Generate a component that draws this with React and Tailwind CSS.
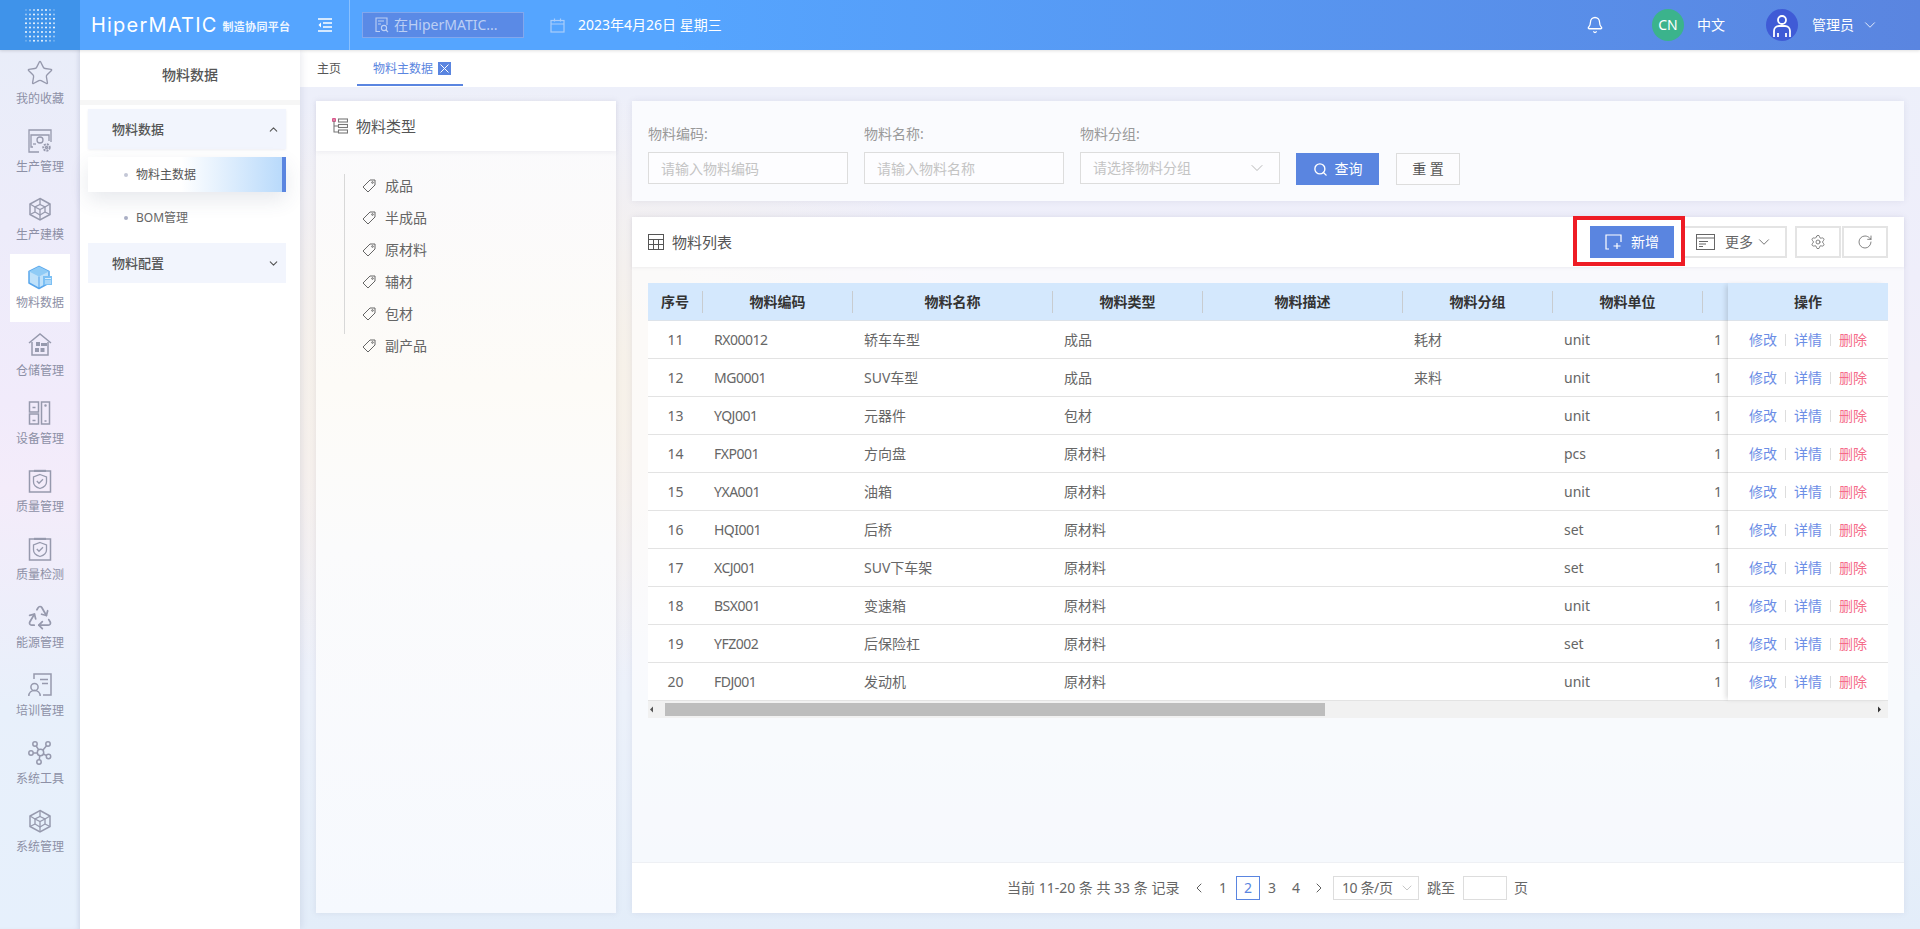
import { Bell, ChevronDown, ChevronLeft, ChevronRight, ChevronUp, Recycle, RotateCw, Search, Settings, Star } from 'lucide-react'

const RAIL = [
  { label: '我的收藏', icon: 'star' },
  { label: '生产管理', icon: 'prod' },
  { label: '生产建模', icon: 'hex' },
  { label: '物料数据', icon: 'cube', active: true },
  { label: '仓储管理', icon: 'house' },
  { label: '设备管理', icon: 'device' },
  { label: '质量管理', icon: 'shield' },
  { label: '质量检测', icon: 'shield' },
  { label: '能源管理', icon: 'recycle' },
  { label: '培训管理', icon: 'train' },
  { label: '系统工具', icon: 'hub' },
  { label: '系统管理', icon: 'hex' },
]

const TYPES = ['成品', '半成品', '原材料', '辅材', '包材']

const COLS = [
  { title: '物料编码', w: 'w-[150px]', key: 'code', latin: true },
  { title: '物料名称', w: 'w-[200px]', key: 'name' },
  { title: '物料类型', w: 'w-[150px]', key: 'type' },
  { title: '物料描述', w: 'w-[200px]', key: 'desc' },
  { title: '物料分组', w: 'w-[150px]', key: 'group' },
  { title: '物料单位', w: 'w-[150px]', key: 'unit' },
  { title: '', w: 'w-[150px]', key: 'qty' },
]

const ROWS = [
  { no: 11, code: 'RX00012', name: '轿车车型', type: '成品', desc: '', group: '耗材', unit: 'unit', qty: 1 },
  { no: 12, code: 'MG0001', name: 'SUV车型', type: '成品', desc: '', group: '来料', unit: 'unit', qty: 1 },
  { no: 13, code: 'YQJ001', name: '元器件', type: '包材', desc: '', group: '', unit: 'unit', qty: 1 },
  { no: 14, code: 'FXP001', name: '方向盘', type: '原材料', desc: '', group: '', unit: 'pcs', qty: 1 },
  { no: 15, code: 'YXA001', name: '油箱', type: '原材料', desc: '', group: '', unit: 'unit', qty: 1 },
  { no: 16, code: 'HQI001', name: '后桥', type: '原材料', desc: '', group: '', unit: 'set', qty: 1 },
  { no: 17, code: 'XCJ001', name: 'SUV下车架', type: '原材料', desc: '', group: '', unit: 'set', qty: 1 },
  { no: 18, code: 'BSX001', name: '变速箱', type: '原材料', desc: '', group: '', unit: 'unit', qty: 1 },
  { no: 19, code: 'YFZ002', name: '后保险杠', type: '原材料', desc: '', group: '', unit: 'set', qty: 1 },
  { no: 20, code: 'FDJ001', name: '发动机', type: '原材料', desc: '', group: '', unit: 'unit', qty: 1 },
]

export default function App() {
  return (
    <div className="h-screen w-full flex flex-col overflow-hidden font-['Noto_Sans','Noto_Sans_CJK_SC',sans-serif] bg-[linear-gradient(180deg,#ecf0fa_0%,#efeefa_30%,#f3eef8_50%,#ecf1fa_75%,#e3edf9_100%)]">
      <Header />
      <div className="flex-1 flex min-h-0">
        <Rail />
        <SubMenu />
        <div className="flex-1 flex flex-col min-w-0 bg-[radial-gradient(ellipse_520px_300px_at_12%_38%,#f8f2e4_0%,transparent_100%)]">
          <Tabs />
          <div className="flex-1 flex gap-4 pt-[14px] px-4 pb-4 min-h-0">
            <TypeCard />
            <div className="flex-1 flex flex-col gap-4 min-w-0">
              <SearchCard />
              <ListCard />
            </div>
          </div>
        </div>
      </div>
    </div>
  )
}

function Header() {
  return (
    <div className="relative z-20 h-[50px] flex items-center shrink-0 text-white bg-[linear-gradient(90deg,#55a5ff_0%,#55a5ff_35%,#5a85e0_100%)] shadow-[0_1px_3px_rgba(0,0,0,0.12)]">
      <div className="w-20 h-full flex items-center justify-center bg-[#3f93ea]">
        <DotLogo />
      </div>
      <div className="w-[220px] h-full flex items-center pl-[11px]">
        <span className="font-['Inter',sans-serif] font-normal text-[20px] leading-none tracking-[1.2px] whitespace-nowrap">HiperMATIC</span>
        <span className="ml-[5px] mt-[3px] text-[11px] leading-none font-bold tracking-[0.3px] whitespace-nowrap opacity-90">制造协同平台</span>
      </div>
      <div className="w-[50px] h-full flex items-center justify-center border-r border-white/30">
        <svg width="16" height="14" viewBox="0 0 16 14" fill="none" stroke="#fff" strokeWidth="1.4">
          <path d="M1 1h14M6 5h9M6 9h9M1 13h14" />
          <path d="M4 4.5 1.5 7 4 9.5" fill="#fff" stroke="none" />
        </svg>
      </div>
      <div className="ml-[12px] w-[162px] h-[26px] flex items-center gap-[5px] pl-[12px] border border-white/25 bg-[#5a8ae6] text-sm text-white/60">
        <svg width="14" height="16" viewBox="0 0 14 16" fill="none" stroke="currentColor" strokeWidth="1.1" className="shrink-0">
          <path d="M5 14.5H1V1h11v7M3 4h6M3 7h3" />
          <circle cx="9" cy="11" r="2.6" />
          <path d="m11 13 2 2" />
        </svg>
        <span className="whitespace-nowrap">在HiperMATIC...</span>
      </div>
      <svg width="15" height="15" viewBox="0 0 15 15" fill="none" stroke="#a9cdfb" strokeWidth="1.2" className="ml-[26px]">
        <rect x="1" y="2.5" width="13" height="11.5" />
        <path d="M1 6h13M4.5 0.5v3M10.5 0.5v3" />
      </svg>
      <span className="ml-[13px] text-sm whitespace-nowrap">2023年4月26日 星期三</span>
      <div className="ml-auto flex items-center">
        <Bell size={18} strokeWidth={1.7} className="mr-[48px]" />
        <div className="w-8 h-8 rounded-full bg-[#3bb38c] flex items-center justify-center text-sm">CN</div>
        <span className="ml-[13px] text-sm">中文</span>
        <div className="ml-[41px] w-8 h-8 rounded-full bg-[#3f5bd6] flex items-center justify-center">
          <svg width="20" height="26" viewBox="0 0 20 26" fill="none" stroke="#fff" strokeWidth="1.8">
            <circle cx="10" cy="8" r="4" />
            <path d="M2 25v-6a5 5 0 0 1 5-5h6a5 5 0 0 1 5 5v6M6 25v-4M14 25v-4" />
          </svg>
        </div>
        <span className="ml-[14px] text-sm">管理员</span>
        <ChevronDown size={18} strokeWidth={1.1} className="ml-[7px] mr-[41px]" />
      </div>
    </div>
  )
}

function DotLogo() {
  const dots = []
  for (let y = 0; y < 8; y++) {
    for (let x = 0; x < 8; x++) {
      const edge = Math.min(x, 7 - x) + Math.min(y, 7 - y)
      const op = edge === 0 ? 0.25 : edge === 1 ? 0.5 : (x + y) % 2 ? 0.95 : 0.7
      dots.push(<circle key={x + '-' + y} cx={2 + x * 4} cy={2 + y * 4.4} r="1" fill="#fff" opacity={op} />)
    }
  }
  return (
    <svg width="32" height="34" viewBox="0 0 32 34">
      {dots}
    </svg>
  )
}

function Rail() {
  return (
    <div className="w-20 shrink-0 flex flex-col bg-[linear-gradient(180deg,#e9edf9_0%,#f1ebfb_40%,#f4ecfa_50%,#e8f0fb_75%,#e6f0fc_100%)] shadow-[inset_-4px_0_6px_-4px_rgba(80,90,130,0.18)]">
      {RAIL.map((item) => (
        <div key={item.label} className={`mx-[10px] h-[68px] pt-[11px] flex flex-col items-center ${item.active ? 'bg-white' : ''}`}>
          <div className="h-6 flex items-center justify-center">
            <RailIcon name={item.icon} />
          </div>
          <span className="mt-[6px] text-xs leading-4 text-[#8d90a6] whitespace-nowrap">{item.label}</span>
        </div>
      ))}
    </div>
  )
}

function RailIcon({ name }) {
  const c = '#9699ad'
  if (name === 'star') return <Star size={28} strokeWidth={1.15} color={c} />
  if (name === 'recycle') return <Recycle size={28} strokeWidth={1.5} color={c} />
  if (name === 'cube') {
    return (
      <svg width="26" height="25" viewBox="0 0 26 25">
        <path d="M12 1.500 22 6.500v11.500l-10 5.500L2 18V6.500z" fill="#bfe1fa" stroke="#58a6ec" strokeWidth="1.500" strokeLinejoin="round" />
        <path d="M2 6.500l10 5 10-5-10-5z" fill="#8fcbf6" />
        <path d="M12 11.500v12" stroke="#58a6ec" strokeWidth="1.100" />
        <rect x="16" y="11" width="9" height="9" fill="#7cc0f4" />
        <path d="M18 13.500h6M18 16h6M18 18h6" stroke="#e1f2fd" strokeWidth="0.900" />
      </svg>
    )
  }
  return (
    <svg width="24" height="24" viewBox="0 0 24 24" fill="none" stroke={c} strokeWidth="1.3">
      {name === 'prod' && (
        <>
          <path d="M11 23H1V1h22v12" />
          <path d="M5 18H3V6h18v6" />
          <circle cx="12" cy="11" r="3" />
          <path d="M5 15h3" />
          <circle cx="18.500" cy="18.500" r="3.200" strokeWidth="2" strokeDasharray="2 1" />
          <circle cx="18.500" cy="18.500" r="1" />
        </>
      )}
      {name === 'hex' && (
        <>
          <path d="M12 1.500 22 7v10.500L12 23 2 17.500V7z" strokeWidth="1.500" />
          <path d="M12 7.500 17 10v5l-5 3-5-3v-5z" />
          <path d="M12 1.500v6M22 7l-5 3M2 7l5 3M12 18v5M7 15l-5 2.500M17 15l5 2.500M7 10l5 2.500 5-2.500M12 12.500V18" />
        </>
      )}
      {name === 'house' && (
        <>
          <path d="M1 10 12 1l11 9" strokeWidth="1.500" />
          <path d="M4 9v13h16V9" strokeWidth="1.500" />
          <rect x="8" y="9" width="4" height="4" fill={c} stroke="none" />
          <rect x="13" y="10" width="6" height="3" fill={c} stroke="none" />
          <rect x="7" y="15" width="4" height="4" fill={c} stroke="none" />
          <rect x="12.500" y="15" width="4" height="4" fill={c} stroke="none" />
        </>
      )}
      {name === 'device' && (
        <>
          <rect x="1.500" y="1" width="9" height="10" strokeWidth="1.500" />
          <rect x="1.500" y="13" width="9" height="10" strokeWidth="1.500" />
          <rect x="13.500" y="1" width="8" height="22" strokeWidth="1.500" />
          <path d="M4.500 6.500h3M4.500 19.500h3M16.500 20h2" />
          <circle cx="17.500" cy="4.500" r="0.600" />
        </>
      )}
      {name === 'shield' && (
        <>
          <path d="M6 2H1.500v21h21V2H18" strokeWidth="1.500" />
          <rect x="6" y="0.800" width="12" height="2.200" fill={c} stroke="none" />
          <path d="M12 5.500 18.500 8v5c0 3.500-3 5.500-6.500 6.500C8.500 18.500 5.500 16.500 5.500 13V8z" />
          <path d="m8.800 12 2.200 2.300 4-4" />
        </>
      )}
      {name === 'train' && (
        <>
          <path d="M6 6V1h17v21h-8" strokeWidth="1.500" />
          <path d="M12 6.500h8M14 10.500h6" strokeWidth="1.500" />
          <circle cx="6.500" cy="14" r="3.600" strokeWidth="1.500" />
          <path d="M0.800 23c0-3.500 2.500-5.500 5.700-5.500s5.700 2 5.700 5.500" strokeWidth="1.500" />
        </>
      )}
      {name === 'hub' && (
        <>
          <circle cx="12.500" cy="11.500" r="3.200" strokeWidth="1.500" />
          <circle cx="7" cy="3" r="2.200" strokeWidth="1.500" />
          <circle cx="20" cy="3" r="2.200" strokeWidth="1.500" />
          <circle cx="3" cy="12" r="2.200" strokeWidth="1.500" />
          <circle cx="20.500" cy="15.500" r="2.200" strokeWidth="1.500" />
          <circle cx="11" cy="21" r="2.200" strokeWidth="1.500" />
          <path d="m8.200 5 2.500 3.800M18.500 4.800 15 9M5.200 12h4.100M18.600 14.600l-3.200-1.600M11.200 18.800l.6-4" strokeWidth="1.500" />
        </>
      )}
    </svg>
  )
}

function SubMenu() {
  return (
    <div className="relative z-10 w-[220px] shrink-0 bg-white shadow-[2px_0_6px_rgba(90,100,140,0.12)]">
      <div className="h-[50px] flex items-center justify-center text-sm font-medium text-[#555]">物料数据</div>
      <div className="h-[5px] bg-[#f6f6f6]" />
      <div className="pt-1 pl-2 pr-[14px] space-y-2">
        <MenuGroup label="物料数据" open />
        <div className="relative h-[35px] flex items-center pl-[35px] text-xs text-[#555] bg-[linear-gradient(90deg,#fff_48%,#b9dafb_100%)] border-r-4 border-[#5a85e0] shadow-[0_8px_20px_rgba(60,70,110,0.12)]">
          <span className="absolute left-[36px] w-1 h-1 rounded-full bg-[#c3c7d6]" />
          <span className="ml-[13px]">物料主数据</span>
        </div>
        <div className="relative h-[35px] flex items-center pl-[35px] text-xs text-[#666]">
          <span className="absolute left-[36px] w-1 h-1 rounded-full bg-[#a9aec4]" />
          <span className="ml-[13px]">BOM管理</span>
        </div>
        <MenuGroup label="物料配置" />
      </div>
    </div>
  )
}

function MenuGroup({ label, open }) {
  return (
    <div className={`h-10 pt-px flex items-center justify-between pl-6 pr-[6px] text-[13px] font-medium text-[#555] bg-[#f2f5fd] ${open ? 'shadow-[0_1px_2px_rgba(120,130,170,0.12)]' : ''}`}>
      <span>{label}</span>
      {open ? <ChevronUp size={13} strokeWidth={2} /> : <ChevronDown size={13} strokeWidth={2} />}
    </div>
  )
}

function Tabs() {
  return (
    <div className="h-[37px] shrink-0 bg-white flex items-start text-xs">
      <span className="ml-[17px] mt-[12px] leading-[14px] text-[#555]">主页</span>
      <div className="ml-4 w-[106px] h-9 border-b-2 border-[#5a85e0] flex items-start pt-[12px] pl-4 text-[#5a85e0]">
        <span className="leading-[14px]">物料主数据</span>
        <span className="ml-[5px] w-[13px] h-[13px] bg-[#5a85e0] flex items-center justify-center">
          <svg width="9" height="9" viewBox="0 0 9 9" stroke="#fff" strokeWidth="1">
            <path d="m0.500 0.500 8 8M8.500 0.500l-8 8" />
          </svg>
        </span>
      </div>
    </div>
  )
}

function Tag() {
  return (
    <svg width="14" height="14" viewBox="0 0 14 14" fill="none" stroke="#666" strokeWidth="1" className="shrink-0">
      <path d="M8 1h5v5L6 13 1 8z" strokeLinejoin="round" />
      <circle cx="10.500" cy="3.500" r="0.800" />
    </svg>
  )
}

function TypeItem({ label }) {
  return (
    <div className="h-8 flex items-center pl-[17px] text-sm text-[#666]">
      <Tag />
      <span className="ml-[9px]">{label}</span>
    </div>
  )
}

function TypeCard() {
  return (
    <div className="w-[300px] shrink-0 flex flex-col bg-[linear-gradient(180deg,#fafafd_0%,#fdfbf7_35%,#fbfbfc_55%,#f6f9fe_100%)] shadow-[0_0_6px_rgba(110,110,140,0.14)]">
      <div className="h-[50px] shrink-0 bg-white flex items-center pl-4 shadow-[0_2px_4px_rgba(120,120,140,0.08)]">
        <svg width="16" height="16" viewBox="0 0 16 16" fill="none" stroke="#777" strokeWidth="1.100">
          <rect x="0.800" y="0.800" width="2.400" height="2.400" stroke="#c26" />
          <path d="M2 3v11h4M2 8h4" />
          <rect x="6.500" y="1" width="9" height="3" />
          <rect x="6.500" y="6.500" width="9" height="3" />
          <rect x="6.500" y="12" width="9" height="3" />
        </svg>
        <span className="ml-2 text-[15px] text-[#555]">物料类型</span>
      </div>
      <div className="mt-[23px] ml-7 h-40 border-l border-[#d8d8d8]">
        <div className="-mt-1">
          {TYPES.map((t) => (
            <TypeItem key={t} label={t} />
          ))}
        </div>
      </div>
      <div className="-mt-1 ml-[29px]">
        <TypeItem label="副产品" />
      </div>
    </div>
  )
}

function Field({ label, children, w = 'w-[200px]' }) {
  return (
    <div className={`${w} shrink-0`}>
      <div className="text-sm leading-[20px] text-[#999]">{label}</div>
      <div className="mt-[8px]">{children}</div>
    </div>
  )
}

function SearchCard() {
  const input = 'w-full h-8 px-3 border border-[#ddd] bg-white/60 text-sm outline-none placeholder:text-[#c4c4c4]'
  return (
    <div className="h-[100px] shrink-0 flex items-start gap-4 pl-4 pt-[23px] bg-[#fafbfe] shadow-[0_0_6px_rgba(110,110,140,0.12)]">
      <Field label="物料编码:">
        <input className={input} placeholder="请输入物料编码" />
      </Field>
      <Field label="物料名称:">
        <input className={input} placeholder="请输入物料名称" />
      </Field>
      <Field label="物料分组:">
        <div className="h-8 px-3 border border-[#ddd] bg-white/60 flex items-center justify-between text-sm text-[#c4c4c4]">
          <span>请选择物料分组</span>
          <ChevronDown size={20} strokeWidth={1} color="#aaa" />
        </div>
      </Field>
      <button className="mt-[29px] h-8 w-[83px] flex items-center justify-center gap-[7px] bg-[#5a85e0] text-sm text-white">
        <Search size={15} strokeWidth={2.200} />
        查询
      </button>
      <button className="mt-[29px] ml-[1px] h-8 w-[64px] border border-[#ddd] bg-white/40 text-sm text-[#555]">重 置</button>
    </div>
  )
}

function ToolBtn({ className, children }) {
  return <button className={`h-8 flex items-center justify-center border-2 border-[#e4e4e4] text-[#666] ${className}`}>{children}</button>
}

function ListCard() {
  return (
    <div className="flex-1 flex flex-col min-h-0 bg-white/65 shadow-[0_0_6px_rgba(110,110,140,0.12)]">
      <div className="h-[50px] shrink-0 bg-white flex items-center pl-4 pr-4 shadow-[0_1px_3px_rgba(120,120,140,0.1)]">
        <svg width="16" height="16" viewBox="0 0 16 16" fill="none" stroke="#555" strokeWidth="1">
          <rect x="0.500" y="0.500" width="15" height="15" />
          <path d="M0.500 5.500h15M0.500 10.500h15M5.500 5.500v10M10.500 5.500v10" />
        </svg>
        <span className="ml-2 text-[15px] text-[#555]">物料列表</span>
        <div className="ml-auto flex items-center">
          <div className="border-4 border-[#ee1c25] pl-[13px] pr-[7px] pt-[6px] pb-1 -mt-[2px] bg-white z-[1]">
            <button className="w-[84px] h-8 bg-[#5a85e0] text-white text-sm flex items-center justify-center gap-2">
              <svg width="18" height="16" viewBox="0 0 18 16" fill="none" stroke="#fff" strokeWidth="1.200">
                <path d="M4 15H1V1h15v7M12 9v6M8.500 12h7" />
              </svg>
              新增
            </button>
          </div>
          <ToolBtn className="w-[103px] -ml-[1px] border-l-0 text-sm">
            <svg width="19" height="16" viewBox="0 0 19 16" fill="none" stroke="#666" strokeWidth="1">
              <rect x="0.500" y="0.500" width="18" height="15" />
              <path d="M0.500 4h18M3 7.500h9M3 10h7M3 12.500h4" />
            </svg>
            <span className="ml-[10px]">更多</span>
            <ChevronDown size={18} strokeWidth={1.200} className="ml-[2px]" />
          </ToolBtn>
          <ToolBtn className="w-[46px] ml-2">
            <Settings size={16} strokeWidth={1.200} />
          </ToolBtn>
          <ToolBtn className="w-[46px] ml-[1px]">
            <RotateCw size={16} strokeWidth={1.200} />
          </ToolBtn>
        </div>
      </div>
      <div className="mt-4 mx-4 flex">
        <div className="flex-1 min-w-0 overflow-hidden">
          <div className="w-[1255px]">
            <div className="h-[38px] flex items-center bg-[#d4e8fd] border-b border-[#dde3ea] text-sm font-semibold text-[#333]">
              <HeadCell w="w-[55px]" title="序号" />
              {COLS.map((c) => (
                <HeadCell key={c.key} w={c.w} title={c.title} />
              ))}
            </div>
            {ROWS.map((r) => (
              <div key={r.no} className="h-[38px] flex items-center border-b border-[#e3e3e3] text-sm text-[#666] bg-white">
                <div className="w-[55px] text-center shrink-0">{r.no}</div>
                {COLS.map((c) => (
                  <div key={c.key} className={`${c.w} shrink-0 px-[11px] whitespace-nowrap ${c.latin ? 'tracking-[-0.5px]' : ''}`}>
                    {r[c.key]}
                  </div>
                ))}
              </div>
            ))}
          </div>
        </div>
        <div className="relative w-40 shrink-0 shadow-[-4px_0_5px_-2px_rgba(0,0,0,0.14)]">
          <div className="h-[38px] flex items-center justify-center bg-[#d4e8fd] border-b border-[#dde3ea] text-sm font-semibold text-[#333]">操作</div>
          {ROWS.map((r) => (
            <div key={r.no} className="h-[38px] flex items-center justify-center border-b border-[#e3e3e3] bg-white text-sm text-[#6c8ee6]">
              <span>修改</span>
              <span className="mx-2 h-3 w-px bg-[#ddd]" />
              <span>详情</span>
              <span className="mx-2 h-3 w-px bg-[#ddd]" />
              <span className="text-[#f56c8a]">删除</span>
            </div>
          ))}
        </div>
      </div>
      <div className="mx-4 h-[17px] shrink-0 flex items-center bg-[#f1f1f1]">
        <svg width="17" height="17" viewBox="0 0 17 17" className="shrink-0">
          <path d="M5 5.500v6l-3-3z" fill="#555" />
        </svg>
        <div className="w-[660px] h-[13px] bg-[#bdbdbd]" />
        <svg width="8" height="17" viewBox="0 0 8 17" className="ml-auto mr-[4px]">
          <path d="M2 5.500v6l3-3z" fill="#333" />
        </svg>
      </div>
      <div className="flex-1" />
      <Pager />
    </div>
  )
}

function HeadCell({ w, title }) {
  return (
    <div className={`${w} shrink-0 h-[22px] flex items-center justify-center border-r border-[#c8ccd0]`}>{title}</div>
  )
}

function Pager() {
  return (
    <div className="h-[51px] shrink-0 bg-white flex items-center pl-[375px] text-sm text-[#666] border-t border-[#eef0f4]">
      <span className="w-[175px] whitespace-nowrap">当前 11-20 条 共 33 条 记录</span>
      <ChevronLeft size={16} strokeWidth={1.300} color="#444" className="ml-[9px]" />
      <span className="ml-[12px]">1</span>
      <span className="ml-[9px] w-6 h-6 border border-[#5a85e0] text-[#5a85e0] flex items-center justify-center">2</span>
      <span className="w-6 text-center">3</span>
      <span className="w-6 text-center">4</span>
      <ChevronRight size={16} strokeWidth={1.300} color="#444" className="ml-[3px]" />
      <div className="ml-[6px] w-[86px] h-6 border border-[#ddd] flex items-center justify-between pl-2 pr-[3px] whitespace-nowrap tracking-[-0.4px]">
        10 条/页
        <ChevronDown size={16} strokeWidth={1} color="#aaa" />
      </div>
      <span className="ml-2">跳至</span>
      <div className="ml-2 w-11 h-6 border border-[#ddd]" />
      <span className="ml-[7px]">页</span>
    </div>
  )
}
